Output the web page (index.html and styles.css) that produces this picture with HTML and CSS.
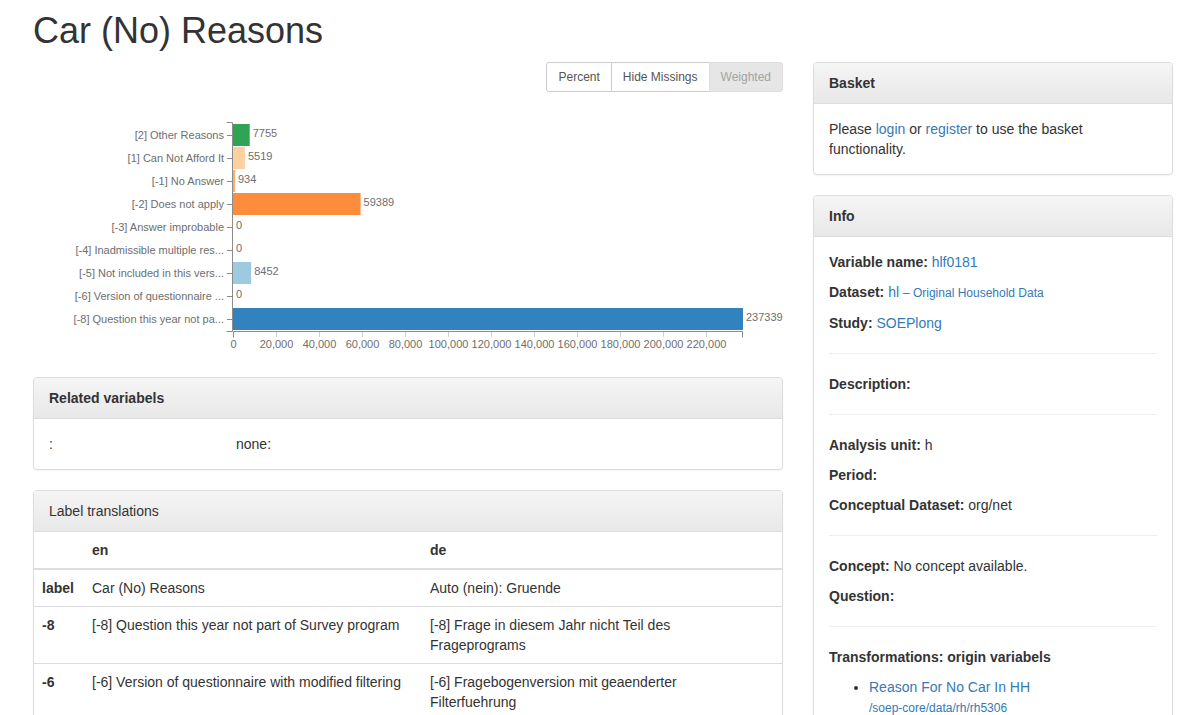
FILE: index.html
```html
<!DOCTYPE html>
<html lang="en">
<head>
<meta charset="utf-8">
<title>Car (No) Reasons</title>
<link rel="stylesheet" href="styles.css">
</head>
<body>
<div class="page">
  <h1 class="title">Car (No) Reasons</h1>
  <div class="row">
    <div class="main">
      <div class="toolbar">
        <div class="btn-group">
          <button class="btn">Percent</button>
          <button class="btn">Hide Missings</button>
          <button class="btn active">Weighted</button>
        </div>
      </div>
      <svg class="chart" width="750" height="265" viewBox="0 0 750 265">
        <g class="bars">
          <rect x="200" y="32" width="16.7" height="22" fill="#31a354"/>
          <rect x="200" y="55" width="11.9" height="22" fill="#fdd0a2"/>
          <rect x="200" y="78" width="2" height="22" fill="#fdae6b"/>
          <rect x="200" y="101" width="127.6" height="22" fill="#fd8d3c"/>
          <rect x="200" y="170" width="18.2" height="22" fill="#9ecae1"/>
          <rect x="200" y="216" width="510" height="22" fill="#3182bd"/>
        </g>
        <g class="values">
          <text x="219.7" y="45">7755</text>
          <text x="214.9" y="68">5519</text>
          <text x="205" y="91">934</text>
          <text x="330.6" y="114">59389</text>
          <text x="203" y="137">0</text>
          <text x="203" y="160">0</text>
          <text x="221.2" y="183">8452</text>
          <text x="203" y="206">0</text>
          <text x="713" y="229">237339</text>
        </g>
        <g class="yaxis">
          <path class="domain" d="M193.5,30.5H199.5V239.5H193.5"/>
          <path class="tick" d="M194,43.5H199 M194,66.5H199 M194,89.5H199 M194,112.5H199 M194,135.5H199 M194,158.5H199 M194,181.5H199 M194,204.5H199 M194,227.5H199"/>
          <text x="191" y="47">[2] Other Reasons</text>
          <text x="191" y="70">[1] Can Not Afford It</text>
          <text x="191" y="93">[-1] No Answer</text>
          <text x="191" y="116">[-2] Does not apply</text>
          <text x="191" y="139">[-3] Answer improbable</text>
          <text x="191" y="162">[-4] Inadmissible multiple res...</text>
          <text x="191" y="185">[-5] Not included in this vers...</text>
          <text x="191" y="208">[-6] Version of questionnaire ...</text>
          <text x="191" y="231">[-8] Question this year not pa...</text>
        </g>
        <g class="xaxis">
          <path class="tick" d="M243.5,240V245 M286.5,240V245 M329.5,240V245 M372.5,240V245 M415.5,240V245 M458.5,240V245 M501.5,240V245 M544.5,240V245 M587.5,240V245 M630.5,240V245 M673.5,240V245"/>
          <path class="domain" d="M200.5,245.5V239.5H709.5V245.5"/>
          <text x="200.5" y="256">0</text>
          <text x="243.5" y="256">20,000</text>
          <text x="286.5" y="256">40,000</text>
          <text x="329.5" y="256">60,000</text>
          <text x="372.5" y="256">80,000</text>
          <text x="415.5" y="256">100,000</text>
          <text x="458.5" y="256">120,000</text>
          <text x="501.5" y="256">140,000</text>
          <text x="544.5" y="256">160,000</text>
          <text x="587.5" y="256">180,000</text>
          <text x="630.5" y="256">200,000</text>
          <text x="673.5" y="256">220,000</text>
        </g>
      </svg>

      <div class="panel">
        <div class="panel-heading"><h3 class="panel-title">Related variabels</h3></div>
        <div class="panel-body related">
          <span class="rel-key">:</span>
          <span class="rel-val">none:</span>
        </div>
      </div>

      <div class="panel">
        <div class="panel-heading"><h3 class="panel-title plain">Label translations</h3></div>
        <table class="table">
          <thead>
            <tr><th class="c1"></th><th class="c2">en</th><th class="c3">de</th></tr>
          </thead>
          <tbody>
            <tr><th>label</th><td>Car (No) Reasons</td><td class="c3">Auto (nein): Gruende</td></tr>
            <tr><th>-8</th><td>[-8] Question this year not part of Survey program</td><td class="c3">[-8] Frage in diesem Jahr nicht Teil des Frageprograms</td></tr>
            <tr><th>-6</th><td>[-6] Version of questionnaire with modified filtering</td><td class="c3">[-6] Fragebogenversion mit geaenderter Filterfuehrung</td></tr>
            <tr><th>-5</th><td>[-5] Not included in this version of the questionnaire</td><td class="c3">[-5] In Fragebogenversion nicht enthalten</td></tr>
            <tr><th>-4</th><td>[-4] Inadmissible multiple response</td><td class="c3">[-4] Unzulaessige Mehrfachantwort</td></tr>
          </tbody>
        </table>
      </div>
    </div>

    <div class="side">
      <div class="panel">
        <div class="panel-heading"><h3 class="panel-title">Basket</h3></div>
        <div class="panel-body">
          Please <a href="#">login</a> or <a href="#">register</a> to use the basket functionality.
        </div>
      </div>

      <div class="panel">
        <div class="panel-heading"><h3 class="panel-title">Info</h3></div>
        <div class="panel-body info">
          <p><b>Variable name:</b> <a href="#">hlf0181</a></p>
          <p><b>Dataset:</b> <a href="#">hl <small>– Original Household Data</small></a></p>
          <p><b>Study:</b> <a href="#">SOEPlong</a></p>
          <hr>
          <p><b>Description:</b></p>
          <hr>
          <p><b>Analysis unit:</b> h</p>
          <p><b>Period:</b></p>
          <p><b>Conceptual Dataset:</b> org/net</p>
          <hr>
          <p><b>Concept:</b> No concept available.</p>
          <p><b>Question:</b></p>
          <hr>
          <h5 class="sub">Transformations: origin variabels</h5>
          <ul class="origins">
            <li><a href="#">Reason For No Car In HH<br><small>/soep-core/data/rh/rh5306</small></a></li>
          </ul>
        </div>
      </div>
    </div>
  </div>
</div>
</body>
</html>
```
FILE: styles.css
```css
* { box-sizing: border-box; }
html, body { margin: 0; padding: 0; background: #fff; }
body {
  font-family: "Liberation Sans", Arial, Helvetica, sans-serif;
  font-size: 14px;
  line-height: 20px;
  color: #333;
}
a { color: #337ab7; text-decoration: none; }
small { font-size: 12px; }

.page { padding: 0 16px 0 33px; width: 1189px; }

.title {
  font-size: 36px;
  font-weight: 500;
  line-height: 1.1;
  margin: 11px 0 11px;
  color: #333;
}

.row { display: flex; gap: 30px; align-items: flex-start; }
.main { width: 750px; flex: none; }
.side { width: 360px; flex: none; }

.toolbar { display: flex; justify-content: flex-end; }
.btn-group { display: flex; }
.btn {
  font-family: inherit;
  font-size: 12px;
  line-height: 18px;
  padding: 5px 11px;
  border: 1px solid #ccc;
  background: #fff;
  color: #555;
  margin: 0;
  margin-left: -1px;
}
.btn:first-child { border-radius: 3px 0 0 3px; margin-left: 0; }
.btn:last-child { border-radius: 0 3px 3px 0; }
.btn.active {
  background: #e6e6e6;
  border-color: #ddd;
  color: #a3a3a3;
}

.chart { display: block; margin-bottom: 20px; font-family: "Liberation Sans", Arial, sans-serif; }
.chart text { font-size: 11px; fill: #6e6e6e; }
.chart .yaxis text { text-anchor: end; }
.chart .xaxis text { text-anchor: middle; }
.chart .domain { fill: none; stroke: #8c8c8c; stroke-width: 1; }
.chart .tick { fill: none; stroke: #cfcfcf; stroke-width: 1; }
.chart .yaxis .tick { stroke: #8c8c8c; }

.panel {
  border: 1px solid #ddd;
  border-radius: 4px;
  background: #fff;
  margin-bottom: 20px;
  box-shadow: 0 1px 2px rgba(0,0,0,.05);
}
.panel-heading {
  padding: 10px 15px;
  border-bottom: 1px solid #ddd;
  border-radius: 3px 3px 0 0;
  background: linear-gradient(to bottom, #f5f5f5 0, #e8e8e8 100%);
}
.panel-title {
  margin: 0;
  font-size: 14px;
  line-height: 20px;
  font-weight: bold;
  color: #333;
}
.panel-title.plain { font-weight: normal; }
.panel-body { padding: 15px; }

.related { display: flex; }
.rel-key { width: 187px; }

.table { width: 100%; border-collapse: collapse; }
.table th, .table td {
  padding: 8px;
  text-align: left;
  vertical-align: top;
  line-height: 20px;
  border-top: 1px solid #ddd;
}
.table thead th {
  border-top: 0;
  border-bottom: 2px solid #ddd;
  vertical-align: bottom;
}
.table .c1 { width: 50px; }
.table .c2 { width: 338px; }
.table .c3 { padding-right: 70px; }

.info p { margin: 0 0 10px; }
.info hr { border: 0; border-top: 1px solid #eee; margin: 20px 0; }
.info .sub { font-size: 14px; line-height: 20px; font-weight: bold; margin: 19px 0 10px; }
.origins { margin: 0; padding-left: 40px; }
```
